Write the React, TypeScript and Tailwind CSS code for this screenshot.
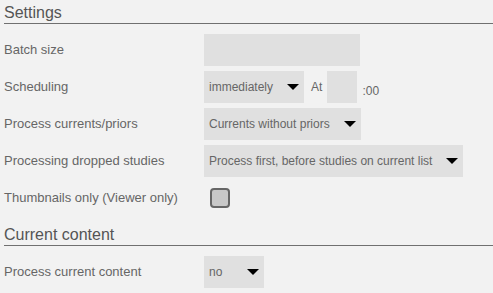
import React from "react";

const Arrow = () => (
  <svg width="12" height="6" viewBox="0 0 12 6" className="shrink-0">
    <polygon points="0,0 12,0 6,6" fill="#000" />
  </svg>
);

const Select = ({ value }: { value: string }) => (
  <div className="inline-flex items-center justify-between gap-[14px] h-[32px] min-w-[60px] bg-[#e0e0e0] pl-[5px] pr-[5px] text-[12px] text-[#666]">
    <span className="whitespace-nowrap">{value}</span>
    <Arrow />
  </div>
);

const Heading = ({ title }: { title: string }) => (
  <div className="ml-[4px] pt-[4px] pb-[1px] leading-[18px] text-[16px] text-[#555] border-b border-[#707070]">
    {title}
  </div>
);

const Row = ({ label, children }: { label: string; children: React.ReactNode }) => (
  <div className="flex items-center h-[32px]">
    <div className="w-[200px] shrink-0 text-[13px] text-[#666] leading-[16px]">{label}</div>
    <div className="flex items-center h-full">{children}</div>
  </div>
);

export default function App() {
  return (
    <div
      className="w-[493px] h-[293px] bg-[#f2f2f2] overflow-hidden"
      style={{ fontFamily: '"Liberation Sans", Arial, sans-serif' }}
    >
      <Heading title="Settings" />
      <div className="pl-[4px] mt-[10px] flex flex-col gap-[5px]">
        <Row label="Batch size">
          <div className="w-[156px] h-[32px] bg-[#e0e0e0]" />
        </Row>
        <Row label="Scheduling">
          <Select value="immediately" />
          <span className="ml-[7px] text-[12px] text-[#666]">At</span>
          <div className="ml-[5px] w-[30px] h-[32px] bg-[#e0e0e0]" />
          <span className="ml-[5px] self-end mb-[5px] text-[12px] leading-[14px] text-[#666]">:00</span>
        </Row>
        <Row label="Process currents/priors">
          <Select value="Currents without priors" />
        </Row>
        <Row label="Processing dropped studies">
          <Select value="Process first, before studies on current list" />
        </Row>
        <Row label="Thumbnails only (Viewer only)">
          <div className="ml-[6px] w-[20px] h-[20px] rounded-[4px] border-2 border-[#666] bg-[#c8c8c8]" />
        </Row>
      </div>
      <div className="mt-[8px]">
        <Heading title="Current content" />
      </div>
      <div className="pl-[4px] mt-[10px] flex flex-col gap-[5px]">
        <Row label="Process current content">
          <Select value="no" />
        </Row>
      </div>
    </div>
  );
}
